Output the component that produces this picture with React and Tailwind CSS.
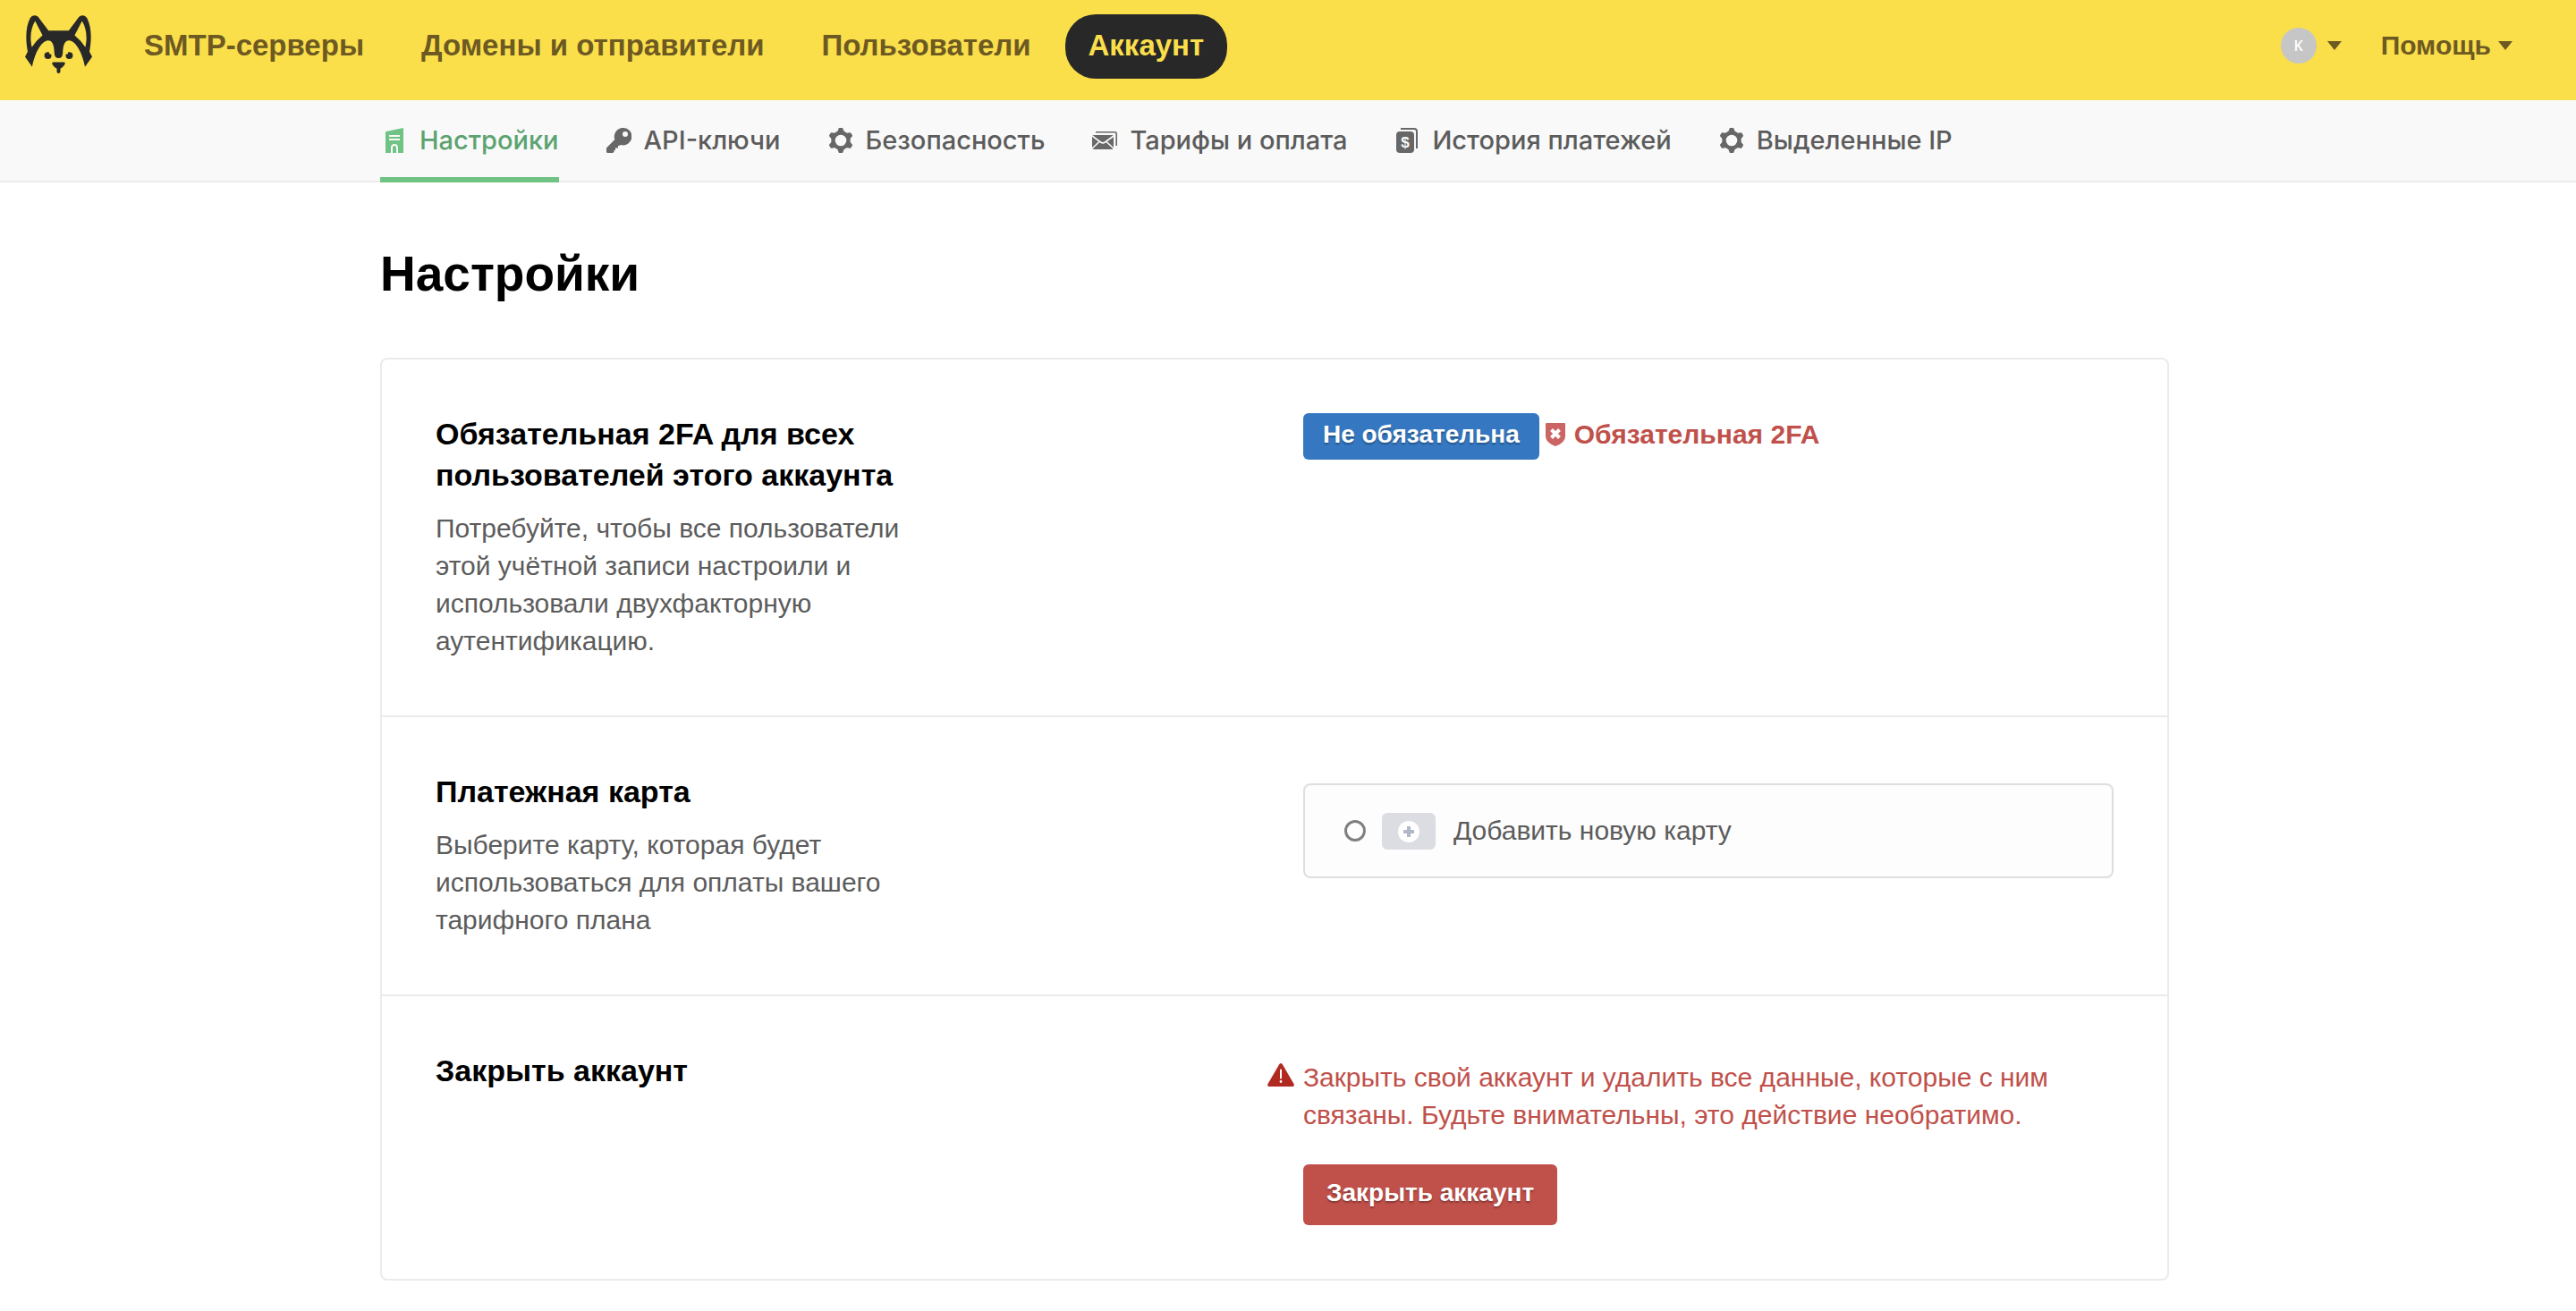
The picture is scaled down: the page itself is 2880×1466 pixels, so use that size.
function Logo() {
    return (
        <svg viewBox="82 48 226 200" className="h-[67px] w-[75px]" fill="#282828">
            <path
                fillRule="evenodd"
                d="M82 190L91 173C83 130 84 90 99 60Q109 44 126 55Q130 60 136 69L161 102H229L254 69Q260 60 264 55Q281 44 291 60C306 90 307 130 299 173L308 190L284 224C276 180 255 138 231 135C216 135 210 148 209 180Q208 195 195 195Q182 195 181 180C180 148 174 135 159 135C135 138 114 180 106 224ZM116 70C100 95 98 130 105 158Q120 135 141 118ZM274 70L249 118Q270 135 285 158C292 130 290 95 274 70Z"
            />
            <circle cx="159" cy="186" r="12" />
            <circle cx="231" cy="186" r="12" />
            <circle cx="168" cy="177" r="5" fill="#fadf4b" />
            <circle cx="222" cy="177" r="5" fill="#fadf4b" />
            <path d="M177 208H213Q217 208 217 213Q214 223 201 230V240Q201 246 195 246Q189 246 189 240V230Q176 223 173 213Q173 208 177 208Z" />
        </svg>
    );
}

function Caret() {
    return (
        <svg viewBox="0 0 16 10" className="h-[10px] w-4" fill="currentColor">
            <path d="M0 0H16L8 10Z" />
        </svg>
    );
}

function BuildingIcon() {
    return (
        <svg viewBox="0 0 20 28" className="h-7 w-5">
            <path d="M0 5Q0 4 1 4L20 0V28H0Z" fill="#6fc384" />
            <path d="M4 9H16M4 13H16" stroke="#f9f9f9" strokeWidth="2" />
            <path d="M7 28V22Q7 19 10 19Q13 19 13 22V28" fill="none" stroke="#f9f9f9" strokeWidth="2" />
        </svg>
    );
}

function KeyIcon() {
    return (
        <svg viewBox="0 0 28 28" className="size-7" fill="#676767">
            <path
                fillRule="evenodd"
                d="M18.3 0A9.7 9.7 0 1 1 16 19L14 20H13V22.5H10V25H8.5V27L7 28H1.5Q0 28 0 26.5V22.5L9.3 13A9.7 9.7 0 0 1 18.3 0ZM21 4A3 3 0 1 0 21 10A3 3 0 1 0 21 4Z"
            />
        </svg>
    );
}

function GearIcon() {
    return (
        <svg viewBox="0 0 28 28" className="size-7" fill="#676767">
            {[0, 60, 120].map((angle) => (
                <path key={angle} d="M11.5 1Q11.5 0 12.5 0H15.5Q16.5 0 16.5 1L18 5H10ZM11.5 27Q11.5 28 12.5 28H15.5Q16.5 28 16.5 27L18 23H10Z" transform={`rotate(${angle} 14 14)`} />
            ))}
            <circle cx="14" cy="14" r="8.5" fill="none" stroke="#676767" strokeWidth="4.4" />
        </svg>
    );
}

function MailIcon() {
    return (
        <svg viewBox="0 0 28 28" className="size-7">
            <rect y="8" width="24" height="16" rx="2" fill="#676767" />
            <path d="M4 4.8H25.5Q27.2 4.8 27.2 6.5V20" fill="none" stroke="#676767" strokeWidth="1.6" />
            <path d="M0 9L9.5 16Q12 17.8 14.5 16L24 9M0 23L8 15.5M24 23L16 15.5" fill="none" stroke="#f9f9f9" strokeWidth="1.6" />
        </svg>
    );
}

function MoneyIcon() {
    return (
        <svg viewBox="0 0 24 28" className="h-7 w-6">
            <rect y="4" width="20" height="24" rx="4" fill="#676767" />
            <path d="M5 1H20Q23 1 23 4V23" fill="none" stroke="#676767" strokeWidth="2" />
            <text x="10" y="22" textAnchor="middle" fontSize="17" fontWeight="700" fontFamily="Liberation Sans, sans-serif" fill="#f9f9f9">$</text>
        </svg>
    );
}

function ShieldIcon() {
    return (
        <svg viewBox="0 0 22 26" className="h-[26px] w-[22px]">
            <path d="M0 1Q0 0 1 0H21Q22 0 22 1V15Q22 22 11 26Q0 22 0 15Z" fill="#cc6464" />
            <path d="M6.5 7.5L15.5 16.5M15.5 7.5L6.5 16.5" stroke="#fff" strokeWidth="4" />
        </svg>
    );
}

function WarningIcon() {
    return (
        <svg viewBox="0 0 30 26" className="mt-[5px] h-[26px] w-[30px] shrink-0">
            <path d="M13.3 1Q15 -1 16.7 1L29.5 23Q30.5 26 28 26H2Q-0.5 26 0.5 23Z" fill="#b02a22" />
            <path d="M15 7.5V16.5" stroke="#fff" strokeWidth="2" strokeLinecap="round" />
            <circle cx="15" cy="20.5" r="1.4" fill="#fff" />
        </svg>
    );
}

const navItems = ["SMTP-серверы", "Домены и отправители", "Пользователи", "Аккаунт"];

const tabs = [
    { label: "Настройки", icon: <BuildingIcon /> },
    { label: "API-ключи", icon: <KeyIcon /> },
    { label: "Безопасность", icon: <GearIcon /> },
    { label: "Тарифы и оплата", icon: <MailIcon /> },
    { label: "История платежей", icon: <MoneyIcon /> },
    { label: "Выделенные IP", icon: <GearIcon /> },
];

function Row({ title, description, children }) {
    return (
        <section className="flex justify-between px-[60px] pt-[60px] pb-[62px] last:pb-[60px]">
            <div className="w-[540px]">
                <h2 className="text-[34px] leading-[46px] font-bold text-black">{title}</h2>
                {description && <p className="mt-4">{description}</p>}
            </div>
            <div className="w-[48.3%]">{children}</div>
        </section>
    );
}

export default function App() {
    return (
        <div className="min-h-screen bg-white font-['Liberation_Sans',Arial,sans-serif] text-[30px] leading-[42px] text-[#5c5c5c]">
            <header className="flex h-28 items-start justify-between bg-[#fadf4b] pr-[71px] pl-7 font-bold text-[#6d5922]">
                <div className="flex">
                    <a href="#" aria-label="Главная" className="mt-4">
                        <Logo />
                    </a>
                    <nav className="mt-4 ml-8 flex gap-3 text-[33px] leading-[70px]">
                        {navItems.map((item) => (
                            <a
                                key={item}
                                href="#"
                                className={item === "Аккаунт" ? "rounded-[34px] bg-[#282828] px-[26px] pb-[2px] text-[#fadf4b]" : "px-[26px] pb-[2px]"}
                            >
                                {item}
                            </a>
                        ))}
                    </nav>
                </div>
                <div className="mt-[30px] flex items-center gap-11">
                    <button type="button" className="flex items-center gap-3">
                        <span className="flex size-10 items-center justify-center rounded-full bg-[#c6c6c6] font-['Open_Sans',sans-serif] text-[16px] font-semibold text-white">K</span>
                        <Caret />
                    </button>
                    <button type="button" className="flex items-center gap-2">
                        Помощь
                        <Caret />
                    </button>
                </div>
            </header>

            <div className="border-b-2 border-[#ebebeb] bg-[#f9f9f9] pr-[30px]">
                <nav className="mx-auto -mb-[2px] flex max-w-[2000px] gap-[51px] font-['Inter',sans-serif] text-[29px] font-medium">
                    {tabs.map((tab, i) => (
                        <a
                            key={tab.label}
                            href="#"
                            className={
                                i === 0
                                    ? "flex h-[92px] items-center gap-3 border-b-6 border-[#6fc384] pt-1 text-[#5ca371]"
                                    : "flex h-[92px] items-center gap-3 border-b-6 border-transparent pt-1"
                            }
                        >
                            <span className="flex w-8 justify-center">{tab.icon}</span>
                            {tab.label}
                        </a>
                    ))}
                </nav>
            </div>

            <main className="pr-[30px]">
                <div className="mx-auto max-w-[2000px] pt-16 pb-[34px]">
                    <h1 className="text-[55px] leading-[76px] font-bold text-black">Настройки</h1>

                    <div className="mt-14 divide-y-2 divide-[#ebebeb] rounded-lg border-2 border-[#ebebeb]">
                        <Row
                            title="Обязательная 2FA для всех пользователей этого аккаунта"
                            description="Потребуйте, чтобы все пользователи этой учётной записи настроили и использовали двухфакторную аутентификацию."
                        >
                            <div className="flex items-center font-bold">
                                <span className="rounded-md bg-[#3578c1] px-[22px] pb-1 text-[28px] leading-[48px] text-white text-shadow-[0_2px_2px_rgba(0,0,0,0.3)]">
                                    Не обязательна
                                </span>
                                <a href="#" className="ml-[7px] flex items-center gap-[10px] pb-1 text-[#c0504a]">
                                    <ShieldIcon />
                                    Обязательная 2FA
                                </a>
                            </div>
                        </Row>

                        <Row title="Платежная карта" description="Выберите карту, которая будет использоваться для оплаты вашего тарифного плана">
                            <label className="mt-[14px] flex h-[106px] items-center rounded-lg border-2 border-[#dedede] bg-[#fdfdfd] px-11">
                                <input type="radio" name="card" className="size-6 appearance-none rounded-full border-3 border-[#7f7f7f] bg-white checked:border-8" />
                                <svg viewBox="0 0 60 41" className="ml-[18px] h-[41px] w-[60px]">
                                    <rect width="60" height="41" rx="6" fill="#dcdde2" />
                                    <circle cx="30" cy="21" r="12" fill="#fff" />
                                    <path d="M30 15V27M24 21H36" stroke="#b0b7c6" strokeWidth="4" />
                                </svg>
                                <span className="ml-5">Добавить новую карту</span>
                            </label>
                        </Row>

                        <Row title="Закрыть аккаунт">
                            <div className="mt-[10px] -ml-10 flex gap-[10px]">
                                <WarningIcon />
                                <p className="text-[#c0504a]">
                                    Закрыть свой аккаунт и удалить все данные, которые с ним связаны. Будьте внимательны, это действие необратимо.
                                </p>
                            </div>
                            <button
                                type="button"
                                className="mt-[34px] block h-[68px] rounded-md bg-[#c0504a] px-[26px] pb-1 text-[28px] font-bold text-white text-shadow-[0_2px_2px_rgba(0,0,0,0.3)]"
                            >
                                Закрыть аккаунт
                            </button>
                        </Row>
                    </div>
                </div>
            </main>
        </div>
    );
}
